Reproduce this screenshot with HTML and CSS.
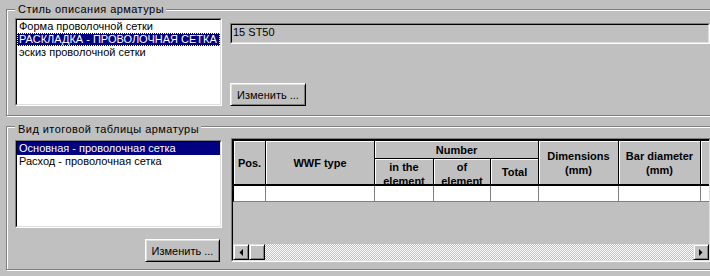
FILE: index.html
```html
<!DOCTYPE html>
<html lang="ru">
<head>
    <meta charset="UTF-8">
    <title>Арматура</title>
    <link rel="stylesheet" href="styles.css">
</head>
<body>
    <div class="dialog">
        <!-- Стиль описания -->
        <div class="group group-style">
            <span class="caption">Стиль описания арматуры</span>
            <div class="listbox">
                <div class="list-inner">
                    <div class="item">Форма проволочной сетки</div>
                    <div class="item selected focused">РАСКЛАДКА - ПРОВОЛОЧНАЯ СЕТКА</div>
                    <div class="item">эскиз проволочной сетки</div>
                </div>
            </div>
            <div class="side">
                <div class="field"><div class="field-inner">15 ST50</div></div>
                <button class="btn btn-wide">Изменить ...</button>
            </div>
        </div>

        <!-- Вид итоговой таблицы -->
        <div class="group group-table">
            <span class="caption caption-low">Вид итоговой таблицы арматуры</span>
            <div class="left-col">
                <div class="listbox">
                    <div class="list-inner">
                        <div class="item selected">Основная - проволочная сетка</div>
                        <div class="item">Расход - проволочная сетка</div>
                    </div>
                </div>
                <button class="btn">Изменить ...</button>
            </div>

            <div class="grid-frame">
                <div class="grid-inner">
                    <div class="grid-head">
                        <div class="hcell tall">Pos.</div>
                        <div class="hcell tall">WWF type</div>
                        <div class="hcell wide">Number</div>
                        <div class="hcell tall">Dimensions<br>(mm)</div>
                        <div class="hcell tall">Bar diameter<br>(mm)</div>
                        <div class="hcell tall"></div>
                        <div class="hcell clip">in the<br>element</div>
                        <div class="hcell clip">of<br>element</div>
                        <div class="hcell">Total</div>
                    </div>
                    <div class="grid-row">
                        <div class="dcell"></div>
                        <div class="dcell"></div>
                        <div class="dcell"></div>
                        <div class="dcell"></div>
                        <div class="dcell"></div>
                        <div class="dcell"></div>
                        <div class="dcell"></div>
                        <div class="dcell"></div>
                    </div>
                    <div class="grid-empty"></div>
                    <div class="hscroll">
                        <div class="sbtn">
                            <svg width="4" height="7" viewBox="0 0 4 7"><polygon points="4,0 4,7 0.5,3.5" fill="#000"/></svg>
                        </div>
                        <div class="sbtn"></div>
                        <div class="track"></div>
                        <div class="sbtn">
                            <svg width="4" height="7" viewBox="0 0 4 7"><polygon points="0,0 0,7 3.5,3.5" fill="#000"/></svg>
                        </div>
                    </div>
                </div>
            </div>
        </div>
    </div>
</body>
</html>
```

FILE: styles.css
```css
/* Basis: klassiek Windows-dialoog */
html, body {
    margin: 0;
    width: 710px;
    height: 276px;
    overflow: hidden;
}

body {
    background-color: #c0c0c0;
    font-family: "Liberation Sans", Arial, sans-serif;
    font-size: 11px;
    color: #000;
}

.dialog {
    padding: 9px 0 0 6px;
}

/* Groepskader met gegraveerde rand */
.group {
    position: relative;
    box-sizing: border-box;
    width: 720px;
    border: 1px solid #808080;
    box-shadow: inset 1px 1px 0 #fff, 1px 1px 0 #fff;
    display: flex;
    align-items: flex-start;
}

.group-style {
    height: 107px;
    padding: 8px 0 0 8px;
}

.group-table {
    height: 144px;
    margin-top: 10px;
    padding: 11px 0 0 8px;
}

.caption {
    position: absolute;
    top: -7px;
    left: 8px;
    padding: 0 2px 0 3px;
    line-height: 13px;
    letter-spacing: 0.45px;
    background-color: #c0c0c0;
}

.caption-low {
    top: -4px;
}

/* Lijstvak */
.listbox {
    box-sizing: border-box;
    width: 207px;
    height: 88px;
    border: 1px solid;
    border-color: #808080 #fff #fff #808080;
}

.list-inner {
    box-sizing: border-box;
    height: 100%;
    border: 1px solid;
    border-color: #000 #dfdfdf #dfdfdf #000;
    background-color: #fff;
    overflow: hidden;
}

.item {
    height: 13px;
    line-height: 13px;
    padding-left: 2px;
    white-space: nowrap;
}

.item.selected {
    background-color: #000080;
    color: #fff;
}

.item.focused {
    outline: 1px dotted #fff;
    outline-offset: -1px;
}

/* Rechterkolom bovenste groep */
.side {
    width: 480px;
    height: 88px;
    margin-left: 8px;
    display: flex;
    flex-direction: column;
    align-items: flex-start;
}

.field {
    box-sizing: border-box;
    width: 480px;
    height: 21px;
    margin-top: 5px;
    border: 1px solid;
    border-color: #808080 #fff #fff #808080;
}

.field-inner {
    box-sizing: border-box;
    height: 100%;
    border: 1px solid;
    border-color: #000 #dfdfdf #dfdfdf #000;
    padding: 1px 0 0 1px;
    line-height: 13px;
}

/* Knoppen */
.btn {
    box-sizing: border-box;
    width: 75px;
    height: 23px;
    padding: 0;
    font: inherit;
    color: #000;
    background-color: #c0c0c0;
    border: 1px solid;
    border-color: #fff #000 #000 #fff;
    box-shadow: inset 1px 1px 0 #dfdfdf, inset -1px -1px 0 #808080;
}

.btn-wide {
    width: 76px;
    margin-top: auto;
}

.left-col {
    width: 207px;
    padding-top: 2px;
    display: flex;
    flex-direction: column;
    align-items: flex-end;
}

.left-col .btn {
    margin-top: 11px;
    margin-right: 2px;
}

/* Tabel (grid) */
.grid-frame {
    box-sizing: border-box;
    width: 480px;
    height: 124px;
    margin-left: 9px;
    border: 1px solid;
    border-color: #808080 #fff #fff #808080;
}

.grid-inner {
    box-sizing: border-box;
    height: 100%;
    border: 1px solid;
    border-color: #000 #dfdfdf #dfdfdf #000;
    display: flex;
    flex-direction: column;
    overflow: hidden;
}

.grid-head,
.grid-row {
    display: grid;
    grid-template-columns: 31px 108px 58px 56px 47px 79px 81px 60px;
    gap: 1px;
}

.grid-head {
    grid-template-rows: 17px 25px;
    background-color: #000;
    border-top: 1px solid #000;
    border-left: 1px solid #000;
    border-bottom: 2px solid #000;
}

.hcell {
    display: flex;
    align-items: center;
    justify-content: center;
    text-align: center;
    background-color: #c0c0c0;
    box-shadow: inset 1px 1px 0 #fff;
    font-weight: bold;
    line-height: 14px;
    overflow: hidden;
}

.hcell.tall {
    grid-row: span 2;
}

.hcell.wide {
    grid-column: span 3;
}

.hcell.clip {
    align-items: flex-start;
    padding-top: 1px;
}

.grid-row {
    grid-template-rows: 15px;
    background-color: #808080;
    border-left: 1px solid #000;
    border-bottom: 1px solid #808080;
}

.dcell {
    background-color: #fff;
}

.grid-empty {
    flex: 1;
}

/* Horizontale schuifbalk */
.hscroll {
    height: 16px;
    display: flex;
}

.sbtn {
    box-sizing: border-box;
    width: 16px;
    height: 16px;
    background-color: #c0c0c0;
    border: 1px solid;
    border-color: #dfdfdf #000 #000 #dfdfdf;
    box-shadow: inset 1px 1px 0 #fff, inset -1px -1px 0 #808080;
    display: flex;
    align-items: center;
    justify-content: center;
}

.track {
    flex: 1;
    background-image: repeating-conic-gradient(#fff 0 25%, #c0c0c0 0 50%);
    background-size: 2px 2px;
}
```
